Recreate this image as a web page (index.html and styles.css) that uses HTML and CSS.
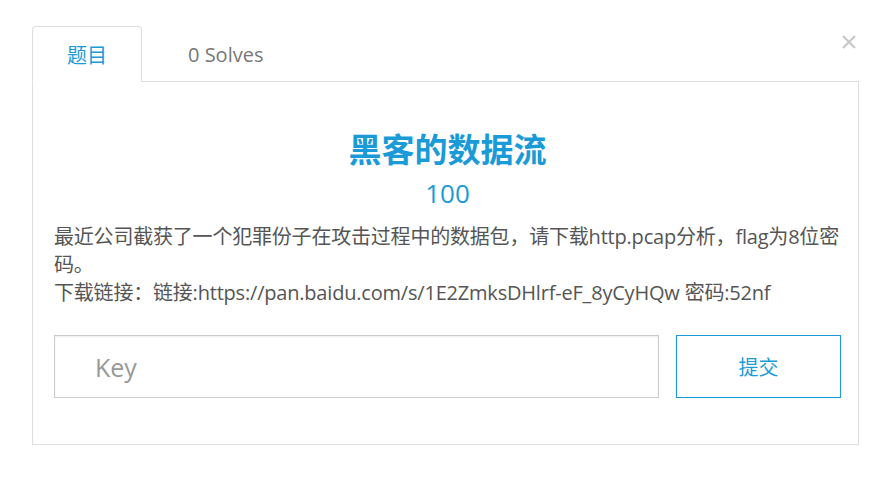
FILE: index.html
```html
<!DOCTYPE html>
<html lang="zh-CN">
<head>
    <meta charset="UTF-8">
    <meta name="viewport" content="width=device-width, initial-scale=1.0">
    <title>黑客的数据流</title>
    <link rel="stylesheet" href="styles.css">
</head>
<body>
    <div class="modal">
        <button class="close" type="button" aria-label="Close">
            <svg width="14" height="14" viewBox="0 0 14 14">
                <path d="M1 1 L13 13 M13 1 L1 13" stroke="#c9c9c9" stroke-width="2.2" fill="none"/>
            </svg>
        </button>

        <ul class="tabs">
            <li class="tab active">题目</li>
            <li class="tab">0 Solves</li>
        </ul>

        <div class="panel">
            <h2 class="challenge-name">黑客的数据流</h2>
            <h3 class="challenge-value">100</h3>
            <p class="challenge-desc">
                最近公司截获了一个犯罪份子在攻击过程中的数据包，请下载http.pcap分析，flag为8位密码。<br>
                下载链接：链接:https://pan.baidu.com/s/1E2ZmksDHlrf-eF_8yCyHQw 密码:52nf
            </p>

            <form class="submit-row" onsubmit="return false;">
                <input type="text" class="key-input" placeholder="Key">
                <button type="submit" class="submit-btn">提交</button>
            </form>
        </div>
    </div>
</body>
</html>
```

FILE: styles.css
```css
body {
    margin: 0;
    background-color: #fff;
    font-family: "Open Sans", "Noto Sans CJK SC", sans-serif;
    color: #555;
}

.modal {
    position: relative;
    padding: 26px 29px 0 32px;
}

.close {
    position: absolute;
    top: 35px;
    right: 32px;
    padding: 0;
    border: none;
    background: none;
    line-height: 0;
    cursor: pointer;
}

.tabs {
    display: flex;
    margin: 0;
    padding: 0;
    list-style: none;
    border-bottom: 1px solid #ddd;
}

.tab {
    height: 54px;
    padding: 0 34px;
    margin-bottom: -1px;
    display: flex;
    align-items: center;
    font-size: 20px;
    color: #777;
    border: 1px solid transparent;
    border-radius: 4px 4px 0 0;
}

.tab + .tab {
    margin-left: 11px;
}

.tab.active {
    color: #1a9bd7;
    background-color: #fff;
    border-color: #ddd;
    border-bottom-color: #fff;
}

.panel {
    border: 1px solid #ddd;
    border-top: none;
    padding: 47px 17px 46px 21px;
}

.challenge-name {
    margin: 0;
    text-align: center;
    font-size: 33px;
    line-height: 42px;
    font-weight: bold;
    color: #1a9bd7;
}

.challenge-value {
    margin: 7px 0 0;
    text-align: center;
    font-size: 26px;
    line-height: 30px;
    font-weight: normal;
    color: #1a9bd7;
}

.challenge-desc {
    margin: 15px 0 0;
    font-size: 20px;
    line-height: 28px;
    letter-spacing: -0.2px;
    color: #555;
}

.submit-row {
    display: flex;
    gap: 17px;
    margin-top: 28px;
}

.key-input {
    flex: 1;
    height: 63px;
    box-sizing: border-box;
    padding: 0 40px;
    border: 1px solid #ccc;
    box-shadow: inset 0 1px 2px rgba(0, 0, 0, 0.08);
    font-family: inherit;
    font-size: 25px;
    color: #555;
    outline: none;
}

.key-input::placeholder {
    color: #999;
}

.submit-btn {
    width: 165px;
    height: 63px;
    background-color: #fff;
    border: 1px solid #1a9bd7;
    color: #1a9bd7;
    font-family: inherit;
    font-size: 20px;
    cursor: pointer;
}
```
